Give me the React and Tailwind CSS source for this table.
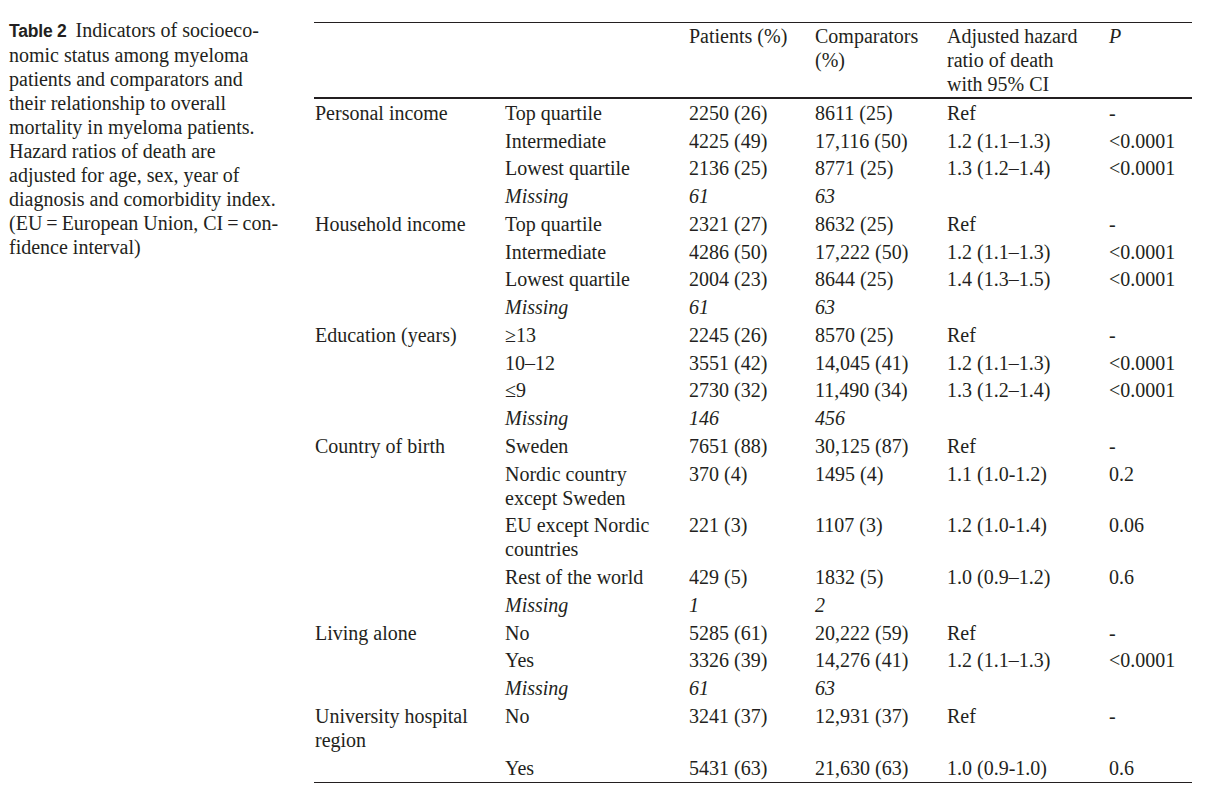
import React from "react";

const groups = [
  {
    label: ["Personal income"],
    rows: [
      { sub: ["Top quartile"], pat: "2250 (26)", comp: "8611 (25)", hr: "Ref", p: "-" },
      { sub: ["Intermediate"], pat: "4225 (49)", comp: "17,116 (50)", hr: "1.2 (1.1–1.3)", p: "<0.0001" },
      { sub: ["Lowest quartile"], pat: "2136 (25)", comp: "8771 (25)", hr: "1.3 (1.2–1.4)", p: "<0.0001" },
      { sub: ["Missing"], pat: "61", comp: "63", italic: true },
    ],
  },
  {
    label: ["Household income"],
    rows: [
      { sub: ["Top quartile"], pat: "2321 (27)", comp: "8632 (25)", hr: "Ref", p: "-" },
      { sub: ["Intermediate"], pat: "4286 (50)", comp: "17,222 (50)", hr: "1.2 (1.1–1.3)", p: "<0.0001" },
      { sub: ["Lowest quartile"], pat: "2004 (23)", comp: "8644 (25)", hr: "1.4 (1.3–1.5)", p: "<0.0001" },
      { sub: ["Missing"], pat: "61", comp: "63", italic: true },
    ],
  },
  {
    label: ["Education (years)"],
    rows: [
      { sub: ["≥13"], pat: "2245 (26)", comp: "8570 (25)", hr: "Ref", p: "-" },
      { sub: ["10–12"], pat: "3551 (42)", comp: "14,045 (41)", hr: "1.2 (1.1–1.3)", p: "<0.0001" },
      { sub: ["≤9"], pat: "2730 (32)", comp: "11,490 (34)", hr: "1.3 (1.2–1.4)", p: "<0.0001" },
      { sub: ["Missing"], pat: "146", comp: "456", italic: true },
    ],
  },
  {
    label: ["Country of birth"],
    rows: [
      { sub: ["Sweden"], pat: "7651 (88)", comp: "30,125 (87)", hr: "Ref", p: "-" },
      { sub: ["Nordic country", "except Sweden"], pat: "370 (4)", comp: "1495 (4)", hr: "1.1 (1.0-1.2)", p: "0.2" },
      { sub: ["EU except Nordic", "countries"], pat: "221 (3)", comp: "1107 (3)", hr: "1.2 (1.0-1.4)", p: "0.06" },
      { sub: ["Rest of the world"], pat: "429 (5)", comp: "1832 (5)", hr: "1.0 (0.9–1.2)", p: "0.6" },
      { sub: ["Missing"], pat: "1", comp: "2", italic: true },
    ],
  },
  {
    label: ["Living alone"],
    rows: [
      { sub: ["No"], pat: "5285 (61)", comp: "20,222 (59)", hr: "Ref", p: "-" },
      { sub: ["Yes"], pat: "3326 (39)", comp: "14,276 (41)", hr: "1.2 (1.1–1.3)", p: "<0.0001" },
      { sub: ["Missing"], pat: "61", comp: "63", italic: true },
    ],
  },
  {
    label: ["University hospital", "region"],
    rows: [
      { sub: ["No"], pat: "3241 (37)", comp: "12,931 (37)", hr: "Ref", p: "-" },
      { sub: ["Yes"], pat: "5431 (63)", comp: "21,630 (63)", hr: "1.0 (0.9-1.0)", p: "0.6" },
    ],
  },
];

const cols = "grid grid-cols-[190px_184px_126px_132px_162px_84px]";

const Lines = ({ lines }) =>
  lines.map((l, i) => (
    <React.Fragment key={i}>
      {i > 0 && <br />}
      {l}
    </React.Fragment>
  ));

export default function App() {
  return (
    <div className="flex min-h-[798px] bg-white pt-[18px] pl-[9px] font-['Liberation_Serif','Times_New_Roman',serif] text-[20px] leading-[24px] text-[#231f20]">
      <div className="w-[305px] shrink-0">
        <span className="font-['Liberation_Sans',Arial,sans-serif] font-bold text-[17.5px] tracking-[-0.2px]">
          Table 2
        </span>
        <span className="ml-[9px]">Indicators of socioeco-</span>
        <br />
        nomic status among myeloma
        <br />
        patients and comparators and
        <br />
        their relationship to overall
        <br />
        mortality in myeloma patients.
        <br />
        Hazard ratios of death are
        <br />
        adjusted for age, sex, year of
        <br />
        diagnosis and comorbidity index.
        <br />
        (EU{"\u2009=\u2009"}European Union, CI{"\u2009=\u2009"}con-
        <br />
        fidence interval)
      </div>

      <div className="w-[878px] shrink-0 mt-[4px]">
        <div className={`${cols} border-t border-b-2 border-[#231f20] pt-[1px] pb-[1px]`}>
          <div />
          <div />
          <div className="pl-[1px]">Patients (%)</div>
          <div className="pl-[1px]">
            Comparators
            <br />
            (%)
          </div>
          <div className="pl-[1px]">
            Adjusted hazard
            <br />
            ratio of death
            <br />
            with 95% CI
          </div>
          <div className="pl-[1px] italic">P</div>
        </div>

        <div className="border-b border-[#231f20]">
          {groups.map((g, gi) =>
            g.rows.map((r, ri) => (
              <div key={`${gi}-${ri}`} className={`${cols} py-[1.88px]`}>
                <div className="pl-[1px]">{ri === 0 && <Lines lines={g.label} />}</div>
                <div className={`pl-[1px] ${r.italic ? "italic" : ""}`}>
                  <Lines lines={r.sub} />
                </div>
                <div className={`pl-[1px] ${r.italic ? "italic" : ""}`}>{r.pat}</div>
                <div className={`pl-[1px] ${r.italic ? "italic" : ""}`}>{r.comp}</div>
                <div className="pl-[1px]">{r.hr}</div>
                <div className="pl-[1px]">{r.p}</div>
              </div>
            ))
          )}
        </div>
      </div>
    </div>
  );
}
